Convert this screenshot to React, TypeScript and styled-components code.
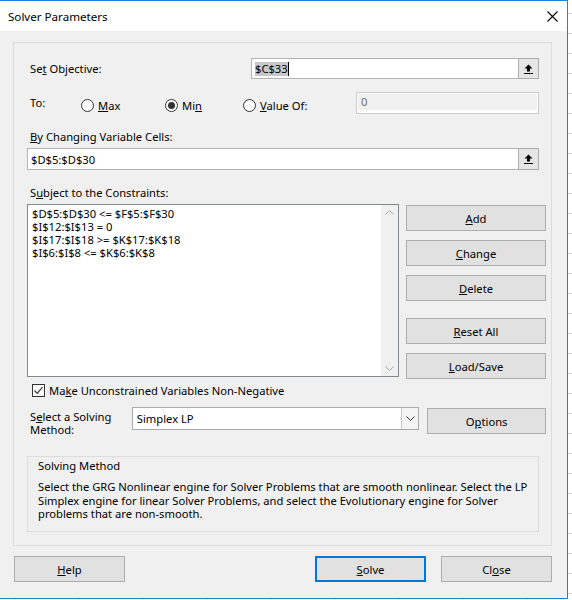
import React from "react";
import styled, { createGlobalStyle } from "styled-components";

const FONT = `"Noto Sans", "Open Sans", "Liberation Sans", sans-serif`;
const SIZE = "11.2px";

const GlobalStyle = createGlobalStyle`
  html, body {
    margin: 0;
    padding: 0;
  }
  body {
    width: 572px;
    height: 600px;
    overflow: hidden;
    background-color: #ffffff;
    background-image:
      linear-gradient(to right, #d4d4d4 1px, transparent 1px),
      linear-gradient(to bottom, #d4d4d4 1px, transparent 1px);
    background-size: 64px 20px;
    background-position: 14px 13px;
    font-family: ${FONT};
    font-size: ${SIZE};
    color: #000;
  }
  * {
    box-sizing: border-box;
  }
`;

const Window = styled.div`
  width: 568px;
  display: flex;
  flex-direction: column;
  background: #f0f0f0;
  border-top: 1px solid #1883d7;
  border-right: 1px solid #1883d7;
  border-bottom: 1px solid #1883d7;
`;

const TitleBar = styled.div`
  height: 30px;
  display: flex;
  align-items: center;
  justify-content: space-between;
  padding: 0 9px 0 8px;
  background: #ffffff;
  font-size: 11.6px;
`;

const Body = styled.div`
  display: flex;
  flex-direction: column;
  padding: 11px 15px 16px 13px;
`;

const Panel = styled.div`
  display: flex;
  flex-direction: column;
  border: 1px solid #dcdcdc;
  padding: 0 5px 13px 13px;
`;

const Row = styled.div<{ $top: number; $height?: number }>`
  display: flex;
  align-items: center;
  margin-top: ${(p) => p.$top}px;
  height: ${(p) => (p.$height ? `${p.$height}px` : "auto")};
`;

const FieldLabel = styled.div<{ $width?: number; $shift?: number }>`
  width: ${(p) => (p.$width ? `${p.$width}px` : "auto")};
  padding-left: 3px;
  line-height: 16px;
  white-space: nowrap;
  margin-top: ${(p) => p.$shift ?? 0}px;
`;

const RefBox = styled.div<{ $width: number; $height: number }>`
  display: flex;
  width: ${(p) => p.$width}px;
  height: ${(p) => p.$height}px;
`;

const RefText = styled.div`
  flex: 1;
  display: flex;
  align-items: center;
  padding-left: 3px;
  background: #ffffff;
  border: 1px solid #b4b4b4;
  border-right: none;
`;

const Selected = styled.span`
  background: #c8c8c8;
  line-height: 14px;
`;

const Caret = styled.span`
  display: inline-block;
  width: 1px;
  height: 14px;
  background: #000;
`;

const RefButton = styled.div`
  width: 21px;
  display: flex;
  align-items: center;
  justify-content: center;
  background: #e5e5e5;
  border: 1px solid #adadad;
`;

const ToGrid = styled.div`
  display: grid;
  grid-template-columns: 54px 84px 78px 113px 183px;
  align-items: center;
  height: 22px;
  margin-top: 13px;
`;

const RadioItem = styled.label`
  display: flex;
  align-items: center;
  gap: 4px;
  padding-top: 5px;
`;

const RadioDot = styled.span<{ $checked?: boolean }>`
  width: 13px;
  height: 13px;
  border-radius: 50%;
  border: 1px solid #333333;
  background: #ffffff;
  display: flex;
  align-items: center;
  justify-content: center;

  &::after {
    content: "";
    width: 7px;
    height: 7px;
    border-radius: 50%;
    background: ${(p) => (p.$checked ? "#333333" : "transparent")};
  }
`;

const DisabledInput = styled.div`
  height: 22px;
  border: 1px solid #cccccc;
  background: #ffffff;
  padding: 1px;
`;

const DisabledFill = styled.div`
  height: 16px;
  background: #f0f0f0;
  color: #6d6d6d;
  padding-left: 3px;
  line-height: 16px;
`;

const SectionLabel = styled.div<{ $top: number }>`
  margin-top: ${(p) => p.$top}px;
  padding-left: 3px;
  line-height: 16px;
`;

const ConstraintArea = styled.div`
  display: flex;
  align-items: flex-start;
  gap: 7px;
  height: 173px;
  margin-top: 3px;
`;

const ListBox = styled.div`
  width: 372px;
  height: 173px;
  display: flex;
  background: #ffffff;
  border: 1px solid #828790;
`;

const ListLines = styled.div`
  flex: 1;
  padding: 2px 4px;
  line-height: 13px;
  white-space: pre;
`;

const ScrollBar = styled.div`
  width: 17px;
  display: flex;
  flex-direction: column;
  justify-content: space-between;
  align-items: center;
  padding: 5px 0;
  background: #f0f0f0;
`;

const ButtonColumn = styled.div`
  display: flex;
  flex-direction: column;
  margin-top: 1px;
`;

const Button = styled.button<{ $width: number; $gap?: number; $left?: number; $focused?: boolean }>`
  width: ${(p) => p.$width}px;
  height: 26px;
  margin: ${(p) => p.$gap ?? 0}px 0 0 ${(p) => p.$left ?? 0}px;
  padding: 0;
  font-family: ${FONT};
  font-size: ${SIZE};
  color: #000;
  background: #e1e1e1;
  border: ${(p) => (p.$focused ? "2px solid #0078d7" : "1px solid #adadad")};
`;

const CheckRow = styled.label`
  display: flex;
  align-items: center;
  gap: 4px;
  height: 16px;
  margin-top: 5px;
  padding-left: 5px;
`;

const CheckBox = styled.span`
  width: 13px;
  height: 13px;
  display: flex;
  align-items: center;
  justify-content: center;
  background: #ffffff;
  border: 1px solid #333333;
`;

const SelectRow = styled.div`
  display: flex;
  align-items: flex-start;
  height: 30px;
  margin-top: 9px;
`;

const SelectLabel = styled.div`
  width: 105px;
  padding: 3px 0 0 3px;
  line-height: 13px;
`;

const SelectBox = styled.div`
  width: 288px;
  height: 23px;
  display: flex;
  background: #ffffff;
  border: 1px solid #a9a9a9;
`;

const SelectValue = styled.div`
  flex: 1;
  display: flex;
  align-items: center;
  padding-left: 4px;
`;

const DropButton = styled.div`
  width: 17px;
  display: flex;
  align-items: center;
  justify-content: center;
  border-left: 1px solid #c8c8c8;
  background: #f4f4f4;
`;

const GroupBox = styled.div`
  width: 512px;
  height: 76px;
  margin-top: 19px;
  padding: 1px 9px 0 10px;
  border: 1px solid #dcdcdc;
`;

const GroupTitle = styled.div`
  line-height: 16px;
`;

const GroupText = styled.p`
  margin: 6px 0 0;
  line-height: 13.5px;
  white-space: nowrap;
`;

const BottomBar = styled.div`
  display: flex;
  margin-top: 10px;
  padding-left: 1px;
`;

const Spacer = styled.div`
  flex: 1;
`;

const RefIcon = () => (
  <svg width="9" height="10" viewBox="0 0 9 10">
    <path d="M4.5 0.5 L8.5 4.5 H6 V7.5 H3 V4.5 H0.5 Z" fill="#000" />
    <rect x="0" y="9" width="9" height="1" fill="#000" />
  </svg>
);

const CloseIcon = () => (
  <svg width="11" height="11" viewBox="0 0 11 11">
    <path d="M0.5 0.5 L10.5 10.5 M10.5 0.5 L0.5 10.5" stroke="#000" strokeWidth="1.1" />
  </svg>
);

const Chevron = ({ up }: { up?: boolean }) => (
  <svg width="9" height="5" viewBox="0 0 9 5">
    <path
      d={up ? "M0.5 4.5 L4.5 0.5 L8.5 4.5" : "M0.5 0.5 L4.5 4.5 L8.5 0.5"}
      fill="none"
      stroke="#a6a6a6"
      strokeWidth="1"
    />
  </svg>
);

const CheckMark = () => (
  <svg width="11" height="11" viewBox="0 0 11 11">
    <path d="M1.5 5.5 L4.2 8.3 L9.5 2.2" fill="none" stroke="#333" strokeWidth="1.2" />
  </svg>
);

const constraints = [
  "$D$5:$D$30 <= $F$5:$F$30",
  "$I$12:$I$13 = 0",
  "$I$17:$I$18 >= $K$17:$K$18",
  "$I$6:$I$8 <= $K$6:$K$8",
];

export default function App() {
  return (
    <>
      <GlobalStyle />
      <Window>
        <TitleBar>
          <span>Solver Parameters</span>
          <CloseIcon />
        </TitleBar>
        <Body>
          <Panel>
            <Row $top={15} $height={21}>
              <FieldLabel $width={224}>
                Se<u>t</u> Objective:
              </FieldLabel>
              <RefBox $width={288} $height={21}>
                <RefText>
                  <Selected>$C$33</Selected>
                  <Caret />
                </RefText>
                <RefButton>
                  <RefIcon />
                </RefButton>
              </RefBox>
            </Row>

            <ToGrid>
              <FieldLabel $shift={-1}>To:</FieldLabel>
              <RadioItem>
                <RadioDot />
                <span>
                  <u>M</u>ax
                </span>
              </RadioItem>
              <RadioItem>
                <RadioDot $checked />
                <span>
                  Mi<u>n</u>
                </span>
              </RadioItem>
              <RadioItem>
                <RadioDot />
                <span>
                  <u>V</u>alue Of:
                </span>
              </RadioItem>
              <DisabledInput>
                <DisabledFill>0</DisabledFill>
              </DisabledInput>
            </ToGrid>

            <SectionLabel $top={15}>
              <u>B</u>y Changing Variable Cells:
            </SectionLabel>
            <Row $top={3}>
              <RefBox $width={512} $height={22}>
                <RefText>$D$5:$D$30</RefText>
                <RefButton>
                  <RefIcon />
                </RefButton>
              </RefBox>
            </Row>

            <SectionLabel $top={15}>
              S<u>u</u>bject to the Constraints:
            </SectionLabel>
            <ConstraintArea>
              <ListBox>
                <ListLines>{constraints.join("\n")}</ListLines>
                <ScrollBar>
                  <Chevron up />
                  <Chevron />
                </ScrollBar>
              </ListBox>
              <ButtonColumn>
                <Button $width={140}>
                  <u>A</u>dd
                </Button>
                <Button $width={140} $gap={9}>
                  <u>C</u>hange
                </Button>
                <Button $width={140} $gap={9}>
                  <u>D</u>elete
                </Button>
                <Button $width={140} $gap={17}>
                  <u>R</u>eset All
                </Button>
                <Button $width={140} $gap={9}>
                  <u>L</u>oad/Save
                </Button>
              </ButtonColumn>
            </ConstraintArea>

            <CheckRow>
              <CheckBox>
                <CheckMark />
              </CheckBox>
              <span>
                Ma<u>k</u>e Unconstrained Variables Non-Negative
              </span>
            </CheckRow>

            <SelectRow>
              <SelectLabel>
                S<u>e</u>lect a Solving
                <br />
                Method:
              </SelectLabel>
              <SelectBox>
                <SelectValue>Simplex LP</SelectValue>
                <DropButton>
                  <svg width="9" height="5" viewBox="0 0 9 5">
                    <path d="M0.5 0.5 L4.5 4.5 L8.5 0.5" fill="none" stroke="#333" />
                  </svg>
                </DropButton>
              </SelectBox>
              <Button $width={119} $gap={1} $left={8}>
                O<u>p</u>tions
              </Button>
            </SelectRow>

            <GroupBox>
              <GroupTitle>Solving Method</GroupTitle>
              <GroupText>
                Select the GRG Nonlinear engine for Solver Problems that are smooth nonlinear. Select the LP
                <br />
                Simplex engine for linear Solver Problems, and select the Evolutionary engine for Solver
                <br />
                problems that are non-smooth.
              </GroupText>
            </GroupBox>
          </Panel>

          <BottomBar>
            <Button $width={111}>
              <u>H</u>elp
            </Button>
            <Spacer />
            <Button $width={111} $focused>
              <u>S</u>olve
            </Button>
            <Button $width={111} $left={15}>
              Cl<u>o</u>se
            </Button>
          </BottomBar>
        </Body>
      </Window>
    </>
  );
}
